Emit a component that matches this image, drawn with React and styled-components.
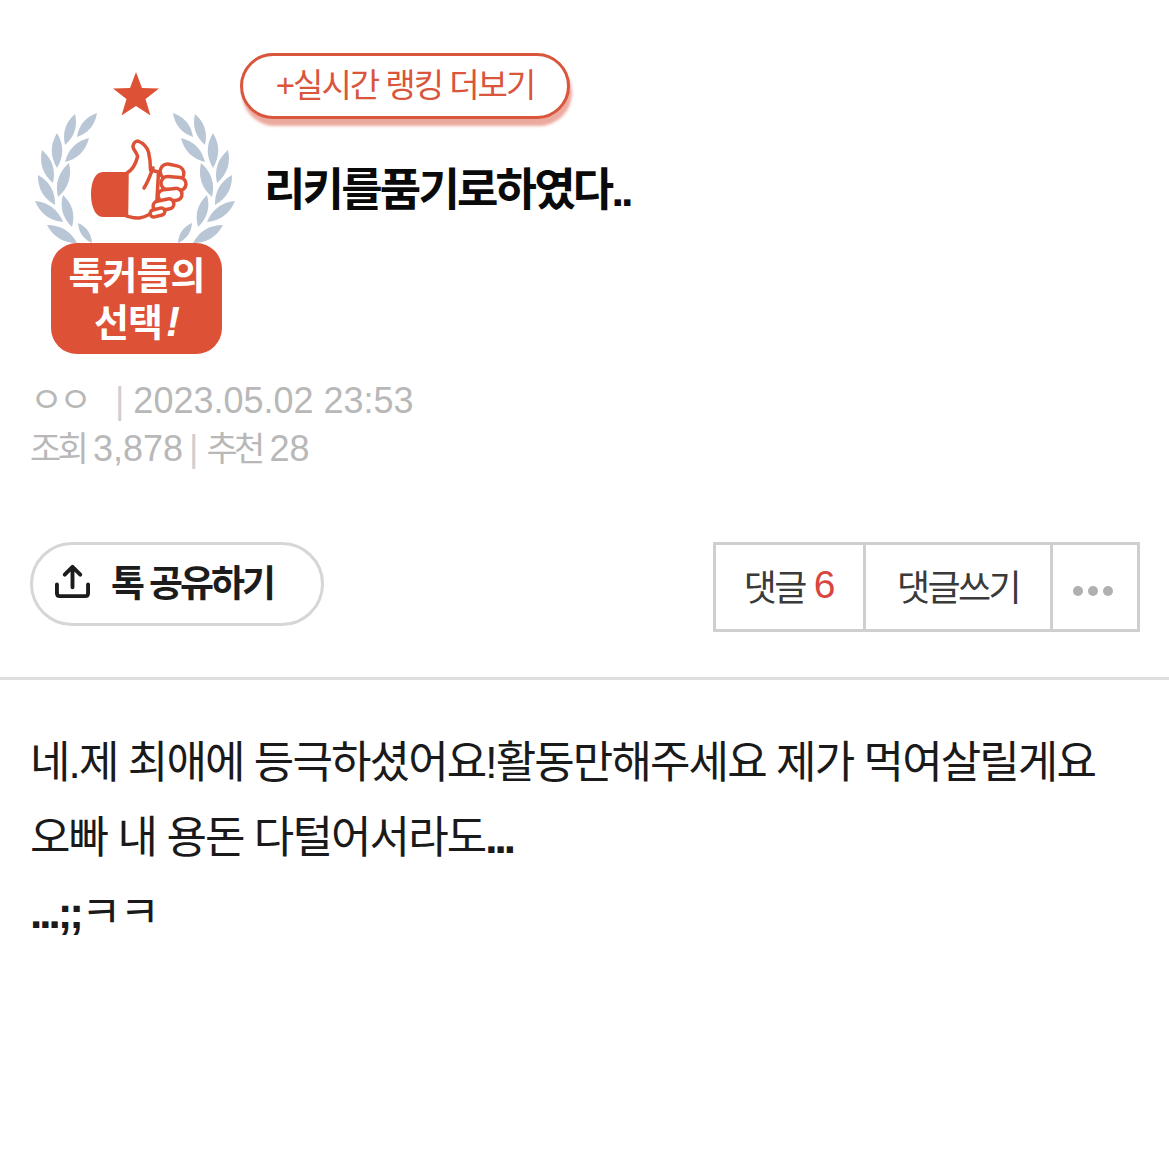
import React from 'react';
import styled, { createGlobalStyle } from 'styled-components';

const KR = '"Liberation Sans", "Noto Sans CJK KR", sans-serif';

const GlobalStyle = createGlobalStyle`
  html, body {
    margin: 0;
    padding: 0;
    background: #fff;
    font-family: ${KR};
  }
`;

const Page = styled.div`
  width: 1169px;
  height: 1169px;
  overflow: hidden;
  background: #fff;
`;

const Top = styled.section`
  display: flex;
  padding: 53px 0 0 30px;
`;

const Emblem = styled.div`
  width: 210px;
  flex: none;
  display: flex;
  flex-direction: column;
  align-items: center;
  padding-top: 8px;
`;

const EmblemArt = styled.svg`
  display: block;
  width: 210px;
  height: 189px;
`;

const EmblemBadge = styled.div`
  position: relative;
  width: 171px;
  height: 111px;
  margin: -7px 0 0 3px;
  border-radius: 26px;
  background: #dd5136;
  color: #fff;
  font-size: 38px;
  font-weight: 700;
  line-height: 45px;
  letter-spacing: -1px;
  text-align: center;
  padding-top: 11px;
  box-sizing: border-box;
  em {
    font-style: italic;
    font-size: 42px;
    margin-left: 4px;
  }
`;

const Heading = styled.div`
  display: flex;
  flex-direction: column;
  align-items: flex-start;
`;

const RankButton = styled.button`
  width: 330px;
  height: 66px;
  padding: 0 0 6px;
  background: #fff;
  border: 3px solid #d9553c;
  border-radius: 33px;
  box-shadow: 2px 7px 3px rgba(221, 100, 80, 0.55);
  color: #d9553c;
  font-family: ${KR};
  font-size: 33px;
  letter-spacing: -2px;
`;

const Title = styled.h1`
  margin: 44px 0 0 24px;
  font-size: 45px;
  line-height: 56px;
  font-weight: 700;
  letter-spacing: -2.8px;
  color: #0a0a0a;
`;

const Meta = styled.div`
  margin: 23px 0 0 30px;
  color: #b8b8b8;
  font-size: 36px;
  line-height: 48px;
`;

const MetaRow = styled.div`
  display: flex;
  align-items: baseline;
  white-space: nowrap;
`;

const Author = styled.span`
  width: 85px;
  letter-spacing: -4px;
  font-size: 36px;
`;

const Sep = styled.span`
  color: #cfcfcf;
  margin: ${p => p.$margin || '0'};
`;

const Hangul = styled.span`
  letter-spacing: -3.8px;
  margin-right: 8px;
  font-size: 34px;
`;

const Actions = styled.div`
  display: flex;
  justify-content: space-between;
  align-items: flex-start;
  margin: 69px 29px 0 30px;
`;

const ShareButton = styled.button`
  display: flex;
  align-items: center;
  gap: 21px;
  width: 294px;
  height: 84px;
  padding: 0 0 6px 22px;
  background: #fff;
  border: 3px solid #d6d6d6;
  border-radius: 42px;
  box-sizing: border-box;
  color: #1c1c1c;
  font-family: ${KR};
  font-size: 37px;
  font-weight: 700;
  letter-spacing: -3.100px;
`;

const ButtonGroup = styled.div`
  display: flex;
  height: 90px;
  border: 3px solid #cfcfcf;
  box-sizing: border-box;
`;

const GroupCell = styled.div`
  display: flex;
  align-items: center;
  justify-content: center;
  width: ${p => p.$width}px;
  box-sizing: border-box;
  border-left: ${p => (p.$first ? 'none' : '3px solid #cfcfcf')};
  color: #3a3a3a;
  font-size: 36px;
  letter-spacing: -2.6px;
  padding: 0 ${p => p.$inset || 0}px 4px 0;
  b {
    font-weight: 400;
    font-size: 39px;
    color: #d9463f;
    letter-spacing: 0;
    margin-left: 9px;
  }
`;

const Dot = styled.i`
  width: 10px;
  height: 10px;
  border-radius: 50%;
  background: #b0b0b0;
  margin: 12px 2.500px 0;
`;

const Rule = styled.hr`
  margin: 45px 0 0;
  border: 0;
  height: 3px;
  background: #dedede;
`;

const Body = styled.div`
  margin: 45px 0 0 30px;
  color: #1a1a1a;
  font-size: 44px;
  line-height: 75px;
  letter-spacing: -1.900px;
  white-space: nowrap;
`;

const Dots = styled.span`
  font-weight: 700;
  letter-spacing: -3px;
`;

const LEAVES = [
  [97, 113, 77, 137], [75, 114, 65, 145], [89, 138, 65, 162], [57, 133, 57, 168],
  [69, 163, 58, 197], [42, 150, 53, 183], [38, 175, 55, 205], [63, 195, 72, 227],
  [35, 201, 63, 222], [47, 225, 77, 243], [78, 223, 92, 243],
];

const leafPath = ([x1, y1, x2, y2]) => {
  const mx = (x1 + x2) / 2;
  const my = (y1 + y2) / 2;
  const nx = -(y2 - y1) * 0.3;
  const ny = (x2 - x1) * 0.3;
  return `M${x1} ${y1}Q${mx + nx} ${my + ny} ${x2} ${y2}Q${mx - nx} ${my - ny} ${x1} ${y1}Z`;
};

const Wreath = ({ flip }) => (
  <g transform={flip ? 'matrix(-1 0 0 1 270 0)' : undefined} fill="#b8c6d6">
    {LEAVES.map(l => (
      <path key={l.join()} d={leafPath(l)} />
    ))}
  </g>
);

const FINGERS = [
  { x: 160, y: 165, w: 24, h: 15, r: 12 },
  { x: 161, y: 177, w: 25, h: 13, r: 4 },
  { x: 158, y: 189, w: 24, h: 12, r: -6 },
  { x: 153, y: 200, w: 21, h: 10, r: -12 },
  { x: 150, y: 209, w: 15, h: 7, r: -14 },
];

const App = () => (
  <Page>
    <GlobalStyle />
    <Top>
      <Emblem>
        <EmblemArt viewBox="30 61 210 189">
          <path
            d="M136 72l6 16 17 .5-13.500 10.500 5 16.500-14.500-9.500-14.500 9.500 5-16.500-13.500-10.500 17-.5z"
            fill="#dd5136"
          />
          <Wreath />
          <Wreath flip />
          <path
            d="M127 172h-24c-8 0-12 10-12 22s4 23 12 23h24z"
            fill="#dd5136"
          />
          <path
            d="M127 173c5-3 9-10 10.500-16 .5-4-5-7-4.500-11 .5-3 3-5 5-5 5 2 9 6 10.500 11 1.500 6 2 12 2 18l8 2-2 36c-5 6-10 9-17 10-5 .5-9-1-13-2z"
            fill="#fff"
            stroke="#dd5136"
            strokeWidth="3.500"
            strokeLinejoin="round"
          />
          {FINGERS.map(f => (
            <rect
              key={f.y}
              x={f.x}
              y={f.y}
              width={f.w}
              height={f.h}
              rx={f.h / 2}
              transform={`rotate(${f.r} ${f.x + f.w / 2} ${f.y + f.h / 2})`}
              fill="#fff"
              stroke="#dd5136"
              strokeWidth="3.500"
            />
          ))}
          <path d="M153 168c-3 8-5 14-9 20" fill="none" stroke="#dd5136" strokeWidth="3.500" strokeLinecap="round" />
        </EmblemArt>
        <EmblemBadge>
          톡커들의
          <br />
          선택<em>!</em>
        </EmblemBadge>
      </Emblem>
      <Heading>
        <RankButton type="button">+실시간 랭킹 더보기</RankButton>
        <Title>리키를품기로하였다..</Title>
      </Heading>
    </Top>

    <Meta>
      <MetaRow>
        <Author>ㅇㅇ</Author>
        <Sep $margin="0 9px 0 0">|</Sep>
        2023.05.02 23:53
      </MetaRow>
      <MetaRow>
        <Hangul>조회</Hangul>
        3,878
        <Sep $margin="0 8px 0 6px">|</Sep>
        <Hangul>추천</Hangul>
        28
      </MetaRow>
    </Meta>

    <Actions>
      <ShareButton type="button">
        <svg width="35" height="35" viewBox="0 0 36 36" fill="none" stroke="#1c1c1c" strokeWidth="4" strokeLinecap="round" strokeLinejoin="round">
          <path d="M18 24V4M10 11l8-8 8 8" />
          <path d="M2 21v9c0 2 1 3 3 3h26c2 0 3-1 3-3v-9" />
        </svg>
        톡 공유하기
      </ShareButton>
      <ButtonGroup>
        <GroupCell $first $width={147}>
          댓글<b>6</b>
        </GroupCell>
        <GroupCell $width={187}>댓글쓰기</GroupCell>
        <GroupCell $width={87} $inset={4}>
          <Dot />
          <Dot />
          <Dot />
        </GroupCell>
      </ButtonGroup>
    </Actions>

    <Rule />

    <Body>
      네.제 최애에 등극하셨어요!활동만해주세요 제가 먹여살릴게요
      <br />
      오빠 내 용돈 다털어서라도<Dots>...</Dots>
      <br />
      <Dots>...;;</Dots>ㅋㅋ
    </Body>
  </Page>
);

export default App;
